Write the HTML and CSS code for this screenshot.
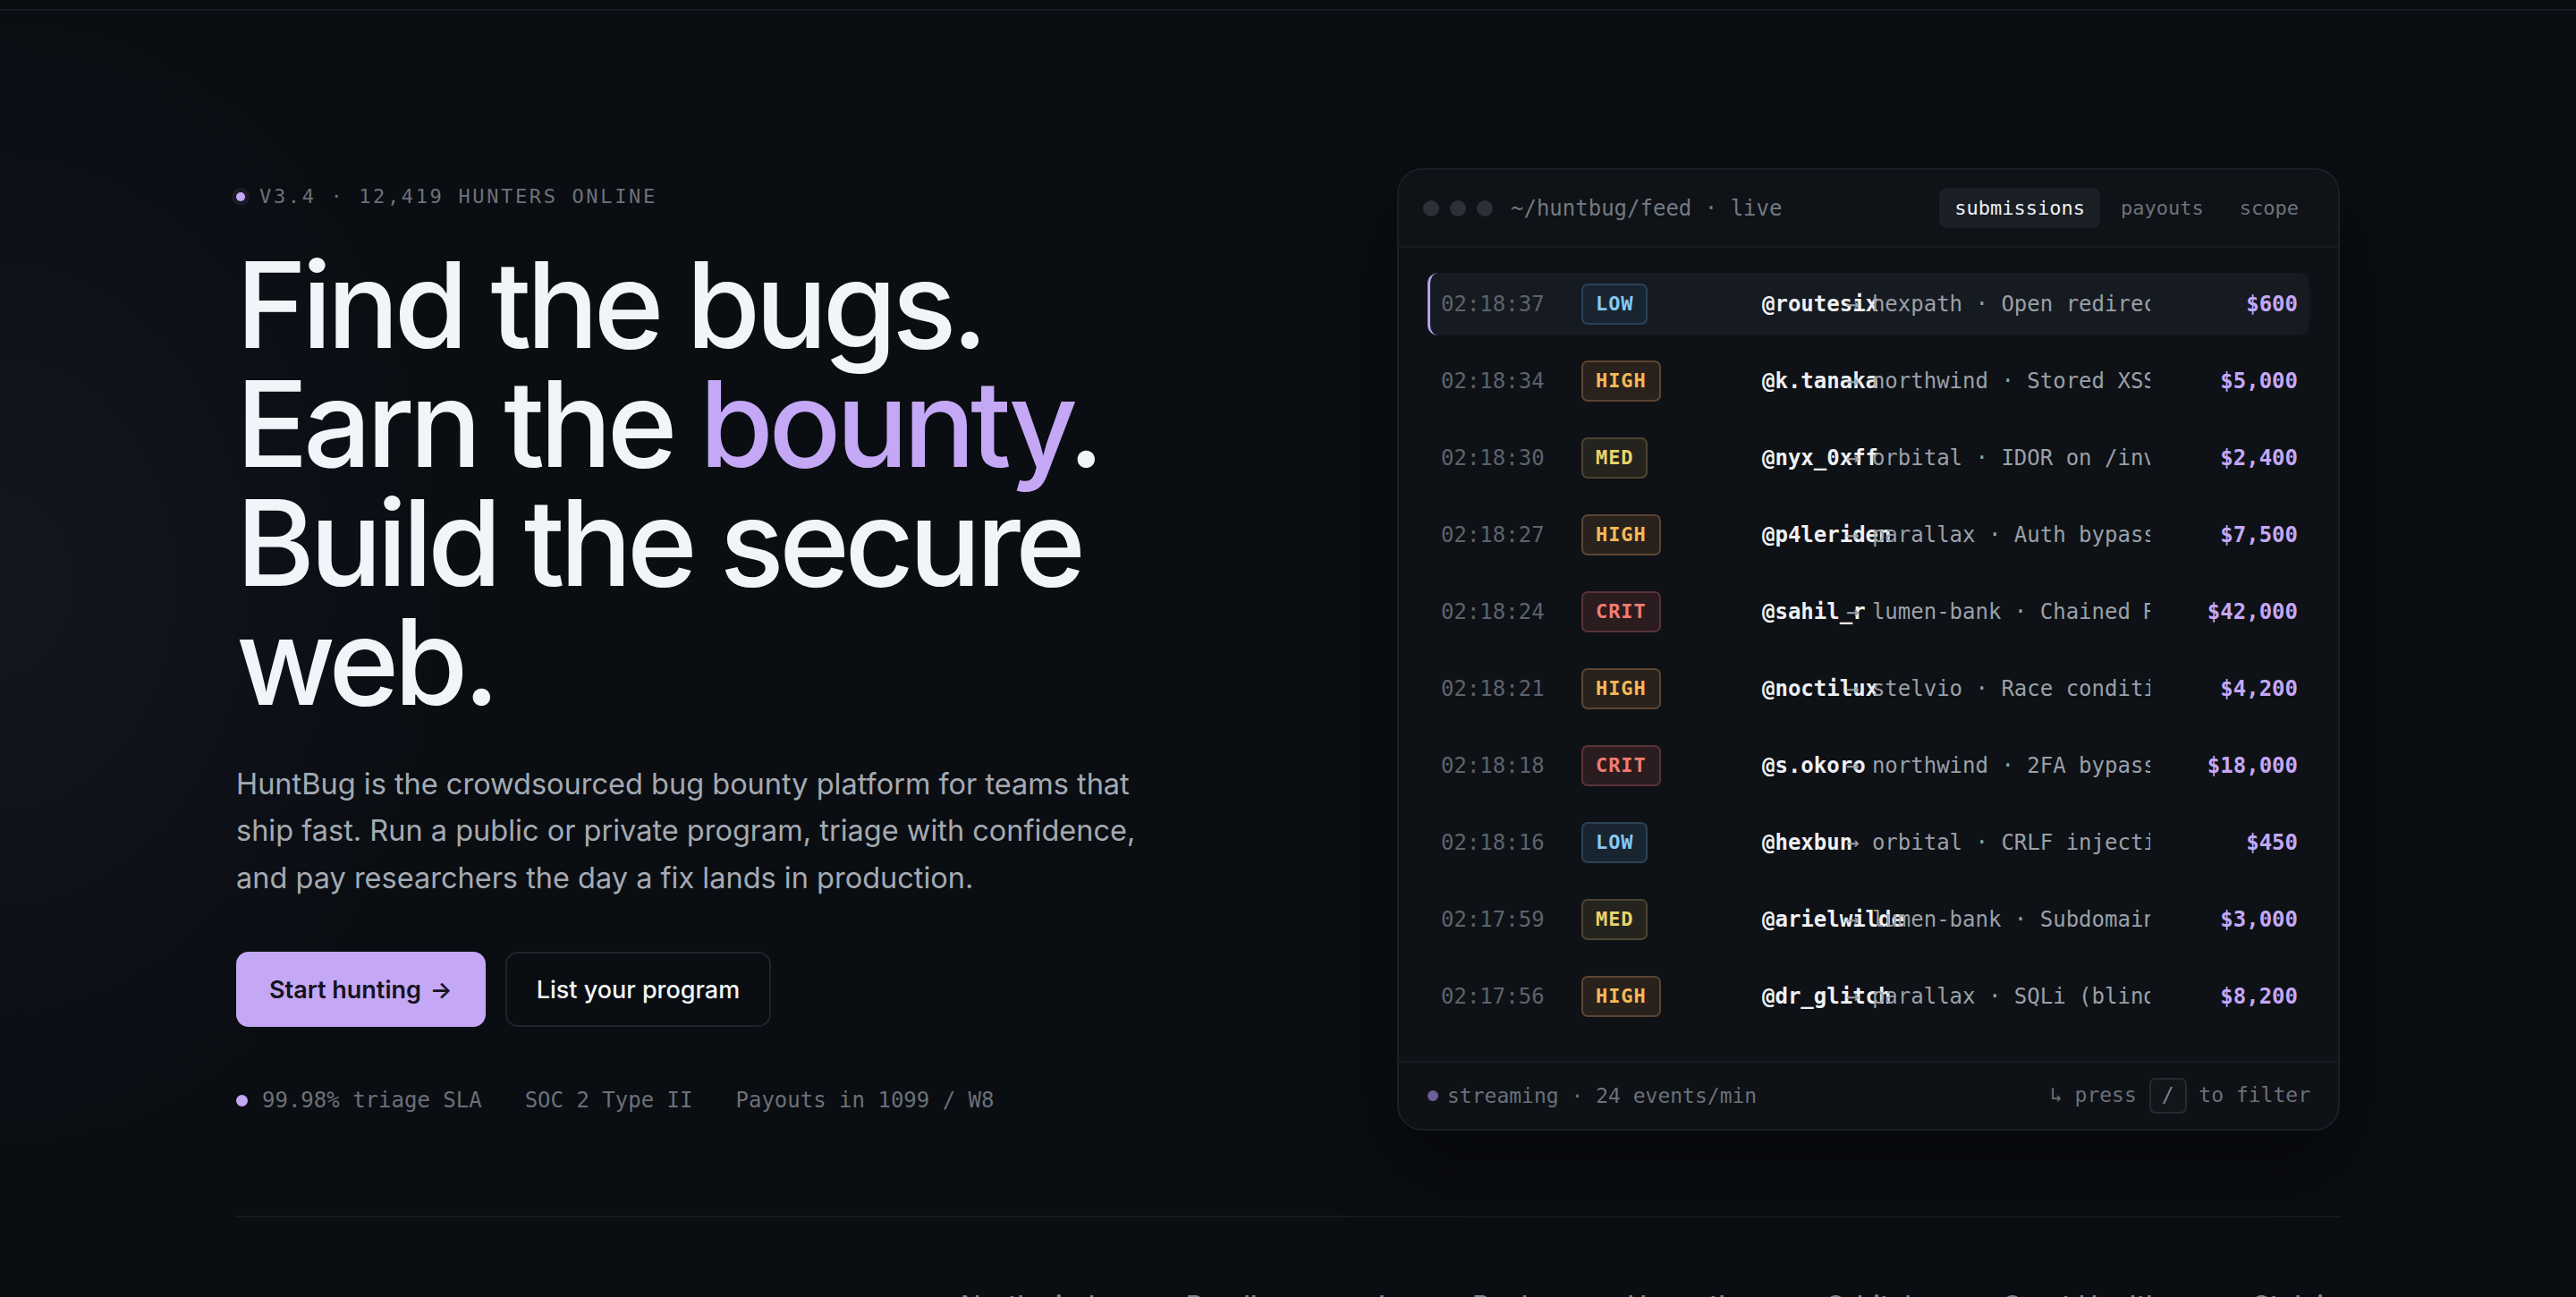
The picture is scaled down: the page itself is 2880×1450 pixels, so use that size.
FILE: index.html
```html
<!DOCTYPE html>
<html lang="en">
<head>
  <meta charset="UTF-8">
  <title>HuntBug — Find the bugs. Earn the bounty.</title>
  <link rel="stylesheet" href="styles.css">
</head>
<body>
  <div class="topbar"></div>

  <main class="wrap">
    <section class="hero">
      <div class="intro">
        <div class="eyebrow"><span class="pulse"></span>V3.4 · 12,419 HUNTERS ONLINE</div>
        <h1>Find the bugs.<br>Earn the <em>bounty</em>.<br>Build the secure<br>web.</h1>
        <p class="lede">HuntBug is the crowdsourced bug bounty platform for teams that ship fast. Run a public or private program, triage with confidence, and pay researchers the day a fix lands in production.</p>
        <div class="actions">
          <a class="btn primary" href="#">Start hunting <span class="arrow">→</span></a>
          <a class="btn ghost" href="#">List your program</a>
        </div>
        <ul class="proof">
          <li><span class="dot"></span>99.98% triage SLA</li>
          <li>SOC 2 Type II</li>
          <li>Payouts in 1099 / W8</li>
        </ul>
      </div>

      <div class="feed">
        <div class="feed-head">
          <span class="light"></span><span class="light"></span><span class="light"></span>
          <span class="path">~/huntbug/feed · live</span>
          <div class="tabs">
            <span class="tab on">submissions</span>
            <span class="tab">payouts</span>
            <span class="tab">scope</span>
          </div>
        </div>

        <div class="feed-list">
          <div class="row live">
            <span class="t">02:18:37</span><span class="sev low">LOW</span>
            <span class="who">@routesix</span><span class="what">→ hexpath · Open redirect on /login</span>
            <span class="amt">$600</span>
          </div>
          <div class="row">
            <span class="t">02:18:34</span><span class="sev high">HIGH</span>
            <span class="who">@k.tanaka</span><span class="what">→ northwind · Stored XSS in comments</span>
            <span class="amt">$5,000</span>
          </div>
          <div class="row">
            <span class="t">02:18:30</span><span class="sev med">MED</span>
            <span class="who">@nyx_0xff</span><span class="what">→ orbital · IDOR on /invoices</span>
            <span class="amt">$2,400</span>
          </div>
          <div class="row">
            <span class="t">02:18:27</span><span class="sev high">HIGH</span>
            <span class="who">@p4leriden</span><span class="what">→ parallax · Auth bypass via OAuth</span>
            <span class="amt">$7,500</span>
          </div>
          <div class="row">
            <span class="t">02:18:24</span><span class="sev crit">CRIT</span>
            <span class="who">@sahil_r</span><span class="what">→ lumen-bank · Chained RCE</span>
            <span class="amt">$42,000</span>
          </div>
          <div class="row">
            <span class="t">02:18:21</span><span class="sev high">HIGH</span>
            <span class="who">@noctilux</span><span class="what">→ stelvio · Race condition in checkout</span>
            <span class="amt">$4,200</span>
          </div>
          <div class="row">
            <span class="t">02:18:18</span><span class="sev crit">CRIT</span>
            <span class="who">@s.okoro</span><span class="what">→ northwind · 2FA bypass</span>
            <span class="amt">$18,000</span>
          </div>
          <div class="row">
            <span class="t">02:18:16</span><span class="sev low">LOW</span>
            <span class="who">@hexbun</span><span class="what">→ orbital · CRLF injection</span>
            <span class="amt">$450</span>
          </div>
          <div class="row">
            <span class="t">02:17:59</span><span class="sev med">MED</span>
            <span class="who">@arielwilde</span><span class="what">→ lumen-bank · Subdomain takeover</span>
            <span class="amt">$3,000</span>
          </div>
          <div class="row">
            <span class="t">02:17:56</span><span class="sev high">HIGH</span>
            <span class="who">@dr_glitch</span><span class="what">→ parallax · SQLi (blind)</span>
            <span class="amt">$8,200</span>
          </div>
        </div>

        <div class="feed-foot">
          <span class="status"><span class="dot"></span>streaming · 24 events/min</span>
          <span class="hint">↳ press <kbd>/</kbd> to filter</span>
        </div>
      </div>
    </section>

    <section class="logos">
      <div class="label">SECURING PAYLOADS AT</div>
      <div class="names">
        <span>Northwind</span>
        <span>Parallax</span>
        <span>Lumen Bank</span>
        <span>Hexpath</span>
        <span>Orbital</span>
        <span>Crest Health</span>
        <span>Stelvio</span>
      </div>
    </section>
  </main>
</body>
</html>
```

FILE: styles.css
```css
body {
  margin: 0;
  height: 1450px;
  overflow: hidden;
  background: #0a0d12;
  background-image: radial-gradient(ellipse 700px 900px at 0 45%, rgba(34, 42, 58, 0.35), transparent 70%);
  color: #eef1f5;
  font-family: Inter, "Noto Sans", sans-serif;
}

.topbar {
  height: 10px;
  border-bottom: 2px solid #181b21;
}

.wrap {
  width: 2352px;
  margin: 0 auto;
}

/* hero */
.hero {
  display: grid;
  grid-template-columns: 1fr 1054px;
  gap: 128px;
  align-items: center;
  padding: 176px 0 95px;
}

.eyebrow {
  display: flex;
  align-items: center;
  gap: 16px;
  height: 32px;
  margin-bottom: 38px;
  font: 22px "DejaVu Sans Mono", monospace;
  letter-spacing: 0.12em;
  color: #6c727b;
}

.pulse {
  width: 10px;
  height: 10px;
  border-radius: 50%;
  background: #c4a8f5;
  box-shadow: 0 0 0 5px #1c1a29;
}

h1 {
  margin: 0 0 45px;
  font-size: 134px;
  line-height: 133px;
  font-weight: 500;
  letter-spacing: -0.041em;
  color: #f1f4f8;
}

h1 em {
  font-style: normal;
  color: #c4a8f5;
}

.lede {
  max-width: 1040px;
  margin: 0 0 56px;
  font-size: 32.5px;
  line-height: 52.5px;
  color: #a4aab2;
}

.actions {
  display: flex;
  gap: 22px;
  margin-bottom: 64px;
}

.btn {
  display: inline-flex;
  align-items: center;
  box-sizing: border-box;
  height: 84px;
  padding: 0 37px;
  border-radius: 14px;
  font-size: 27px;
  text-decoration: none;
}

.btn .arrow {
  margin-left: 10px;
  font-size: 26px;
}

.btn.primary {
  background: #c4a8f5;
  color: #16121f;
  font-weight: 600;
}

.btn.ghost {
  padding: 0 33px;
  border: 2px solid #1f232a;
  color: #f3f5f7;
  font-weight: 500;
}

.proof {
  display: flex;
  gap: 48px;
  margin: 0;
  padding: 0;
  list-style: none;
  font: 24px/36px "DejaVu Sans Mono", monospace;
  color: #6b7179;
}

.proof li {
  display: flex;
  align-items: center;
  gap: 16px;
}

.proof .dot {
  width: 13px;
  height: 13px;
  border-radius: 50%;
  background: #c4a8f5;
}

/* live feed panel */
.feed {
  border: 2px solid #1b1f26;
  border-radius: 28px;
  background: #0e1116;
  box-shadow: 0 40px 90px rgba(0, 0, 0, 0.45);
  overflow: hidden;
  font-family: "DejaVu Sans Mono", monospace;
}

.feed-head {
  display: flex;
  align-items: center;
  height: 85px;
  padding: 0 27px;
  background: #0f1217;
  border-bottom: 2px solid #181b21;
}

.light {
  width: 18px;
  height: 18px;
  margin-right: 12px;
  border-radius: 50%;
  background: #2c3037;
}

.path {
  margin-left: 8px;
  font-size: 24px;
  color: #737a83;
}

.tabs {
  display: flex;
  gap: 6px;
  margin-left: auto;
}

.tab {
  height: 45px;
  padding: 0 17px;
  border-radius: 8px;
  font-size: 22px;
  line-height: 45px;
  color: #6c727b;
}

.tab.on {
  background: #1a1e25;
  color: #eef0f3;
}

.feed-list {
  display: flex;
  flex-direction: column;
  gap: 16px;
  padding: 28px 32px 37px;
}

.row {
  display: grid;
  grid-template-columns: 157px 202px 94px 340px 1fr;
  align-items: center;
  height: 70px;
  padding: 0 13px 0 12px;
  border-left: 3px solid transparent;
  border-radius: 12px;
  font-size: 24px;
}

.row.live {
  background: #161a21;
  border-left-color: #b89ef2;
}

.t {
  color: #5d636c;
}

.sev {
  justify-self: start;
  box-sizing: border-box;
  height: 46px;
  padding: 0 14px;
  border: 2px solid;
  border-radius: 7px;
  font-size: 22px;
  font-weight: bold;
  line-height: 42px;
  letter-spacing: 0.04em;
}

.sev.low  { color: #86c8f2; background: #182531; border-color: #2b4256; }
.sev.high { color: #f6b859; background: #29221c; border-color: #5d4431; }
.sev.med  { color: #e9d46c; background: #24231d; border-color: #4b4431; }
.sev.crit { color: #f27c72; background: #2a1c1f; border-color: #5a3337; }

.who {
  white-space: nowrap;
  font-weight: bold;
  color: #eef0f3;
}

.what {
  white-space: nowrap;
  overflow: hidden;
  color: #9aa0a8;
}

.amt {
  text-align: right;
  font-weight: bold;
  color: #c4a8f5;
}

.feed-foot {
  display: flex;
  align-items: center;
  justify-content: space-between;
  height: 74px;
  padding: 0 31px 0 32px;
  border-top: 2px solid #181b21;
  font-size: 23px;
  color: #6a7078;
}

.status {
  display: flex;
  align-items: center;
  gap: 10px;
}

.status .dot {
  width: 12px;
  height: 12px;
  border-radius: 50%;
  background: #6c5e96;
}

kbd {
  display: inline-block;
  height: 36px;
  padding: 0 12px;
  border: 2px solid #252a31;
  border-radius: 7px;
  background: #12151a;
  font: inherit;
  line-height: 34px;
  vertical-align: middle;
  color: #7b818a;
}

/* customer strip */
.logos {
  display: flex;
  align-items: baseline;
  padding-top: 80px;
  border-top: 2px solid #16191e;
}

.label {
  width: 810px;
  font: 22px "DejaVu Sans Mono", monospace;
  letter-spacing: 0.12em;
  color: #575d65;
}

.names {
  flex: 1;
  display: flex;
  justify-content: space-between;
  font-size: 30px;
  font-weight: 500;
  color: #7d838b;
}
```
